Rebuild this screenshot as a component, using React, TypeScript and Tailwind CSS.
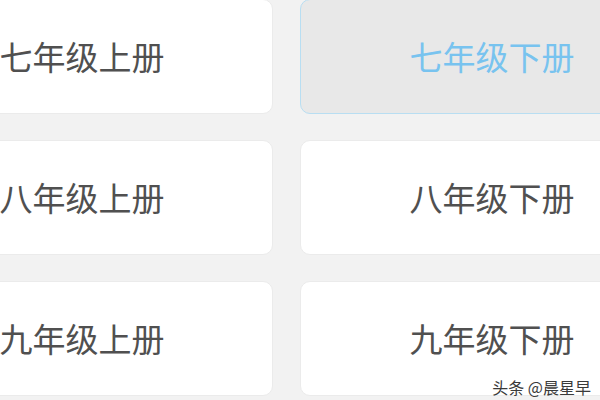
import React from 'react';

const grades = ['七', '八', '九'];

const font = { fontFamily: '"Noto Sans CJK SC", "Noto Sans", sans-serif' };

export default function App() {
    return (
        <div className="relative w-[600px] h-[400px] overflow-hidden bg-[#f2f2f2]" style={font}>
            <div className="ml-[-109px] mt-[-1px] grid grid-cols-[382px_384px] auto-rows-[115px] gap-x-[27px] gap-y-[26px]">
                {grades.map((g, i) => (
                    <React.Fragment key={g}>
                        <div className="flex items-center justify-center rounded-[10px] bg-white border border-[#ebebeb] text-[33px] text-[#505050]">
                            {g}年级上册
                        </div>
                        <div
                            className={
                                i === 0
                                    ? 'flex items-center justify-center rounded-[10px] bg-[#e8e8e8] border border-[#b8def2] text-[33px] text-[#78c3ef]'
                                    : 'flex items-center justify-center rounded-[10px] bg-white border border-[#ebebeb] text-[33px] text-[#505050]'
                            }
                        >
                            {g}年级下册
                        </div>
                    </React.Fragment>
                ))}
            </div>

            {/* watermark */}
            <div className="absolute right-[9px] bottom-[5px] text-[16px] leading-none text-[#3a3a3a]">
                头条 @晨星早
            </div>
        </div>
    );
}
